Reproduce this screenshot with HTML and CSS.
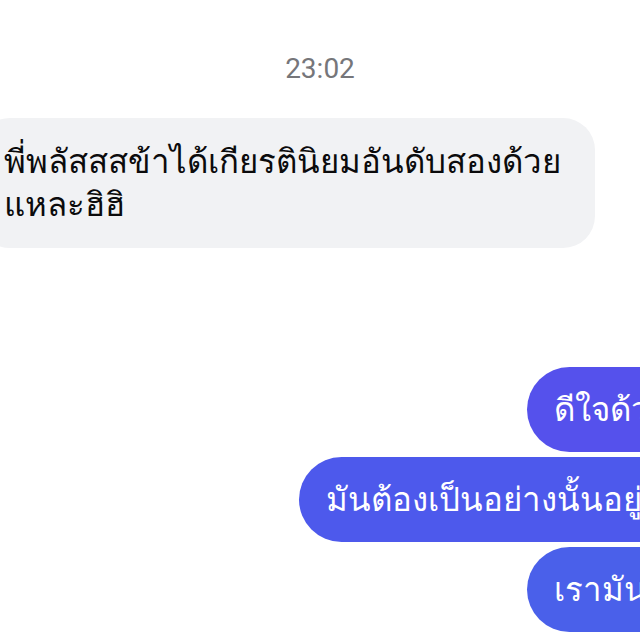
FILE: index.html
```html
<!DOCTYPE html>
<html>
  <head>
    <title>Chat</title>
    <link rel="stylesheet" href="styles.css">
  </head>
  <body>
    <div id="thread">
      <div class="stamp">23:02</div>
      <div class="row in">
        <div class="bubble">พี่พลัสสสข้าได้เกียรตินิยมอันดับสองด้วย<br>แหละฮิฮิ</div>
      </div>
      <div class="row out first">
        <div class="bubble">ดีใจด้วยนะ..</div>
      </div>
      <div class="row out">
        <div class="bubble">มันต้องเป็นอย่างนั้นอยู่แล้วว.</div>
      </div>
      <div class="row out">
        <div class="bubble">เรามันเก่ง!!.</div>
      </div>
    </div>
  </body>
</html>
```

FILE: styles.css
```css
html, body { margin: 0; padding: 0; background: #fff; overflow: hidden; }
body { font-family: "DejaVu Sans", "Noto Sans", sans-serif; }

#thread { width: 780px; margin-left: -22px; padding-top: 51px; display: flex; flex-direction: column; }

.stamp { align-self: center; margin-left: 22px; margin-right: 118px; font-family: Roboto, "Liberation Sans", sans-serif; font-size: 28px; line-height: 36px; color: #76767a; }

.row { display: flex; }
.row.in { margin-top: 31px; }
.row.out { justify-content: flex-end; margin-top: 5px; }
.row.out.first { margin-top: 119px; }

.bubble { font-size: 33px; line-height: 43px; padding: 21px 27px 21px 27px; white-space: nowrap; }
.in .bubble { background: #f1f2f4; color: #0b0b0c; border-radius: 32px; padding: 22px 34px 22px 26px; }
.out .bubble { background: #4d59ec; color: #fff; border-radius: 43px; }
.out.first .bubble { background: #5551ec; }
.out:last-child .bubble { background: #4a60ea; }
```
